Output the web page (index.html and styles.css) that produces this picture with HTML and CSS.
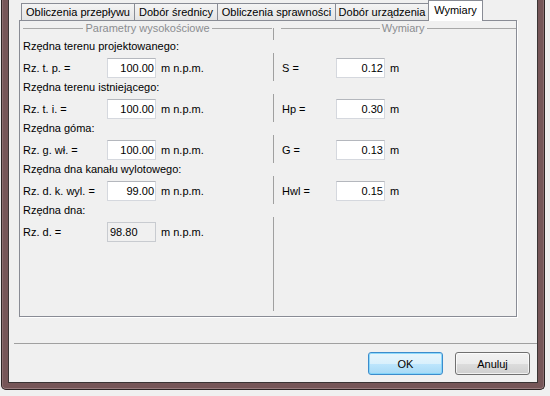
FILE: index.html
```html
<!DOCTYPE html>
<html lang="pl">
<head>
    <meta charset="UTF-8">
    <title>Wymiary</title>
    <link rel="stylesheet" href="styles.css">
</head>
<body>
    <div class="window">
        <div class="client">
            <div class="tabs">
                <div class="tab t1">Obliczenia przepływu</div>
                <div class="tab t2">Dobór średnicy</div>
                <div class="tab t3">Obliczenia sprawności</div>
                <div class="tab t4">Dobór urządzenia</div>
                <div class="tab active">Wymiary</div>
            </div>
            <div class="panel">
                <div class="form">
                    <div class="legend legend-left"><span>Parametry wysokościowe</span></div>
                    <div class="legend legend-right"><span>Wymiary</span></div>

                    <div class="section">Rzędna terenu projektowanego:</div>
                    <div class="row row-left"><span class="lbl">Rz. t. p. =</span><span class="box">100.00</span><span class="unit">m n.p.m.</span></div>
                    <div class="row row-right"><span class="lbl">S =</span><span class="box">0.12</span><span class="unit">m</span></div>

                    <div class="section">Rzędna terenu istniejącego:</div>
                    <div class="row row-left"><span class="lbl">Rz. t. i. =</span><span class="box">100.00</span><span class="unit">m n.p.m.</span></div>
                    <div class="row row-right"><span class="lbl">Hp =</span><span class="box">0.30</span><span class="unit">m</span></div>

                    <div class="section">Rzędna góma:</div>
                    <div class="row row-left"><span class="lbl">Rz. g. wł. =</span><span class="box">100.00</span><span class="unit">m n.p.m.</span></div>
                    <div class="row row-right"><span class="lbl">G =</span><span class="box">0.13</span><span class="unit">m</span></div>

                    <div class="section">Rzędna dna kanału wylotowego:</div>
                    <div class="row row-left"><span class="lbl">Rz. d. k. wyl. =</span><span class="box">99.00</span><span class="unit">m n.p.m.</span></div>
                    <div class="row row-right"><span class="lbl">Hwl =</span><span class="box">0.15</span><span class="unit">m</span></div>

                    <div class="section">Rzędna dna:</div>
                    <div class="row row-left"><span class="lbl">Rz. d. =</span><span class="box disabled">98.80</span><span class="unit">m n.p.m.</span></div>
                </div>
            </div>
            <div class="sep"></div>
            <div class="buttons">
                <button class="btn btn-default">OK</button>
                <button class="btn">Anuluj</button>
            </div>
        </div>
    </div>
</body>
</html>
```

FILE: styles.css
```css
body {
    margin: 0;
    width: 550px;
    height: 396px;
    overflow: hidden;
    background: #f0f0f0;
    font-family: "Liberation Sans", Arial, sans-serif;
    font-size: 11px;
    color: #000;
}
.window {
    box-sizing: border-box;
    margin-left: 1px;
    width: 544px;
    height: 390px;
    background: #765658;
    border: 1px solid #2e2424;
    border-top: none;
    border-radius: 0 0 5px 5px;
    padding: 0 6px 6px;
    box-shadow: inset 0 -1px 0 #9a7e80, inset 1px 0 0 #8c6e70, inset -1px 0 0 #8c6e70;
}
.client {
    box-sizing: border-box;
    height: 383px;
    background: #f0f0f0;
    border: 1px solid #3a3434;
    border-top: none;
}
.tabs {
    display: flex;
    align-items: flex-end;
    height: 20px;
    margin-left: 12px;
}
.tab {
    box-sizing: border-box;
    height: 17px;
    border: 1px solid #898c95;
    border-bottom: none;
    background: linear-gradient(#f4f4f4, #e4e4e4);
    text-align: center;
    line-height: 16px;
    margin-left: -1px;
    white-space: nowrap;
}
.t1 { width: 114px; margin-left: 0; }
.t2 { width: 84px; }
.t3 { width: 119px; }
.t4 { width: 94px; }
.tab.active {
    width: 55px;
    height: 21px;
    margin-bottom: -1px;
    background: #fff;
    line-height: 18px;
    position: relative;
    z-index: 1;
}
.panel {
    box-sizing: border-box;
    margin-left: 10px;
    width: 498px;
    height: 297px;
    border: 1px solid #898c95;
    box-shadow: 1px 1px 0 #fff;
}
.form {
    display: grid;
    grid-template-columns: 253px 1px 242px;
    grid-template-rows: 19px repeat(5, 13px 28px) 1fr;
    height: 100%;
    background: linear-gradient(#a0a0a0, #a0a0a0) 253px 7px / 1px calc(100% - 12px) no-repeat;
}
.legend {
    display: flex;
    align-items: center;
    height: 13px;
    margin-top: 1px;
    color: #8b8d90;
}
.legend::before,
.legend::after {
    content: "";
    flex: 1;
    height: 1px;
    background: #a8a8a8;
}
.legend span {
    padding: 0 2px;
    line-height: 13px;
}
.legend-left {
    grid-column: 1;
    padding-left: 3px;
    margin-right: 1px;
}
.legend-right {
    grid-column: 3;
    padding-left: 7px;
}
.legend-right::before { flex: 1.05; }
.legend-right::after { flex: 0.95; }
.section {
    grid-column: 1 / 3;
    background: #f0f0f0;
    padding-left: 3px;
    line-height: 13px;
    margin-right: -2px;
}
.row {
    display: flex;
    align-items: flex-start;
    padding-top: 5px;
    line-height: 20px;
}
.row-left {
    grid-column: 1;
    padding-left: 3px;
}
.row-right {
    grid-column: 3;
    padding-left: 8px;
}
.row-left .lbl { width: 84px; }
.row-right .lbl { width: 54px; }
.box {
    box-sizing: border-box;
    width: 49px;
    height: 20px;
    line-height: 18px;
    background: #fff;
    border: 1px solid #d5d8de;
    border-top-color: #b4b7bd;
    text-align: right;
    padding-right: 1px;
}
.box.disabled {
    background: #f0f0f0;
    border-color: #c8cbd0;
    text-align: left;
    padding-left: 2px;
}
.unit { margin-left: 5px; }
.sep {
    margin: 26px 0 0 5px;
    height: 1px;
    background: #a0a0a0;
}
.buttons {
    display: flex;
    justify-content: flex-end;
    gap: 12px;
    margin-top: 8px;
    padding-right: 7px;
}
.btn {
    box-sizing: border-box;
    width: 75px;
    height: 23px;
    border: 1px solid #707070;
    border-radius: 3px;
    background: linear-gradient(#f2f2f2, #ebebeb 50%, #dddddd 50%, #cfcfcf);
    box-shadow: inset 0 0 0 1px rgba(255, 255, 255, 0.7);
    font-family: "Liberation Sans", Arial, sans-serif;
    font-size: 11px;
    color: #000;
    padding: 0;
}
.btn-default {
    border-color: #3c8ccc;
    background: linear-gradient(#e8f5fc, #d9f0fc 50%, #bee6fd 50%, #a7d9f5);
    box-shadow: inset 0 0 0 1px rgba(120, 210, 250, 0.8);
}
```
